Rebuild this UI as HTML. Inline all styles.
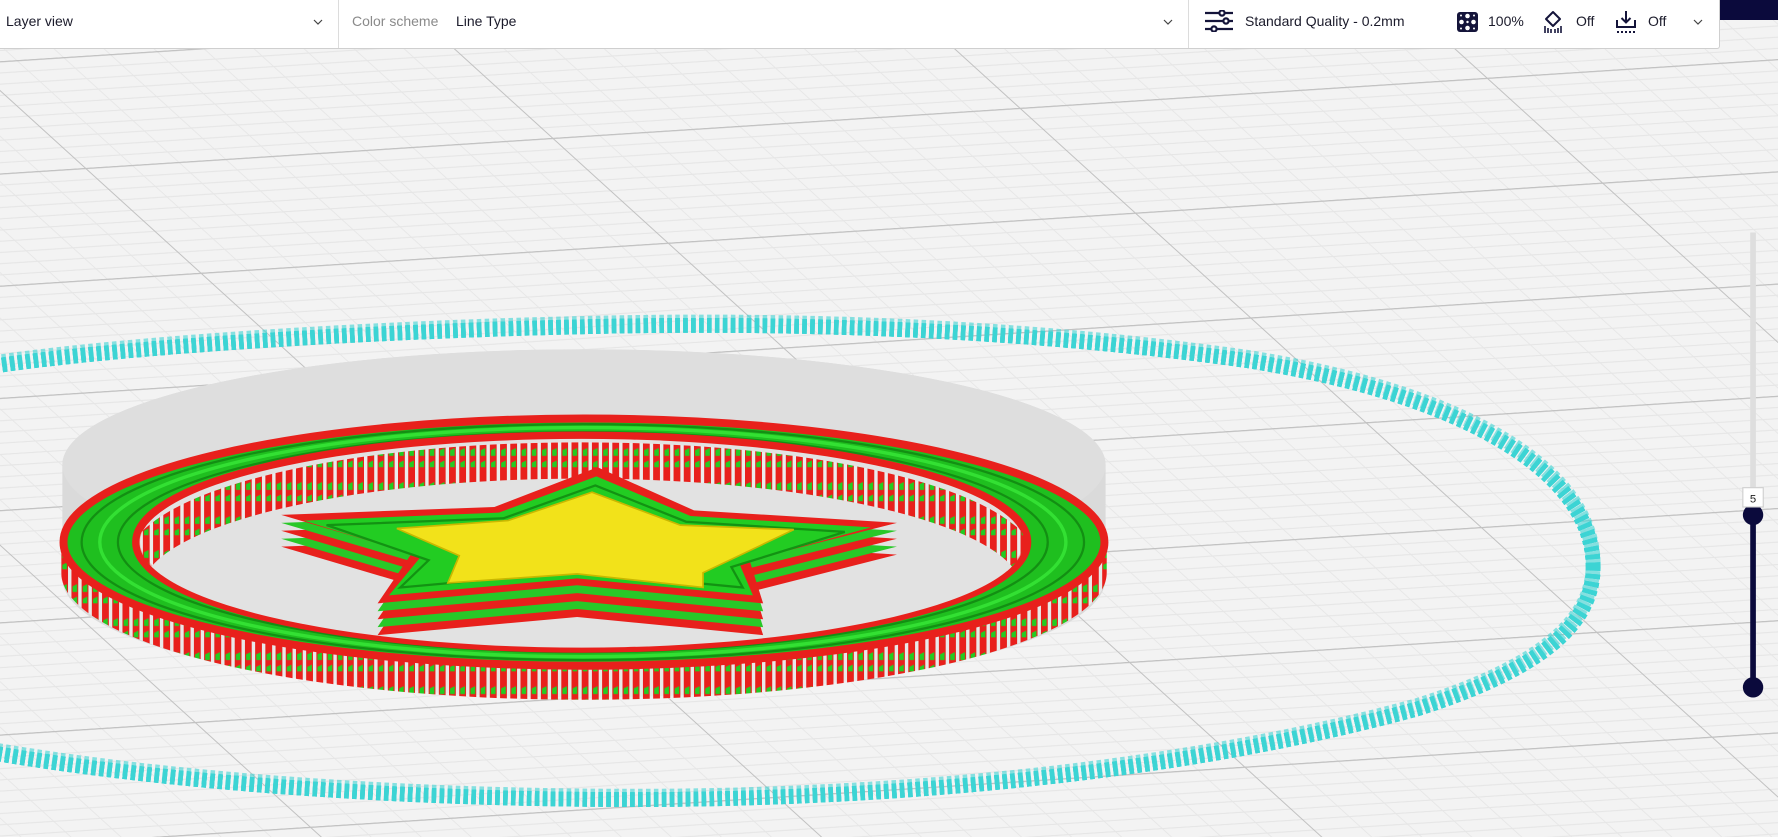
<!DOCTYPE html>
<html><head><meta charset="utf-8">
<style>
html,body{margin:0;padding:0;width:1778px;height:837px;overflow:hidden;background:#f3f3f3;font-family:"Liberation Sans",sans-serif;}
#scene{position:absolute;left:0;top:0;}
.hdr{position:absolute;left:0;top:0;width:1719px;height:48px;background:#fff;border-bottom:1px solid #cfcfcf;border-right:1px solid #cfcfcf;border-bottom-right-radius:3px;}
.t{position:absolute;top:13px;font-size:14px;color:#1b1b2b;white-space:nowrap;line-height:17px;}
.g{color:#8a8a8a;}
.div{position:absolute;top:0;width:1px;height:48px;background:#dcdcdc;}
.chev{position:absolute;top:16px;}
.navy{position:absolute;left:1720px;top:0;width:58px;height:20px;background:#0b0a3c;}
</style></head><body>
<svg id="scene" width="1778" height="837" viewBox="0 0 1568 738" preserveAspectRatio="none">
<defs>
<pattern id="grid" patternUnits="userSpaceOnUse" width="100" height="100" patternTransform="matrix(4.12 -0.265 1.017 0.924 384.8 29.2)">
<rect width="100" height="100" fill="#f3f3f3"/>
<g fill="#e6e6e6">
<rect x="10" width="0.25" height="100"/><rect x="20" width="0.25" height="100"/><rect x="30" width="0.25" height="100"/><rect x="40" width="0.25" height="100"/><rect x="50" width="0.25" height="100"/><rect x="60" width="0.25" height="100"/><rect x="70" width="0.25" height="100"/><rect x="80" width="0.25" height="100"/><rect x="90" width="0.25" height="100"/>
<rect y="10" height="1" width="100"/><rect y="20" height="1" width="100"/><rect y="30" height="1" width="100"/><rect y="40" height="1" width="100"/><rect y="50" height="1" width="100"/><rect y="60" height="1" width="100"/><rect y="70" height="1" width="100"/><rect y="80" height="1" width="100"/><rect y="90" height="1" width="100"/>
</g>
<g fill="#c2c2c2"><rect x="0" width="0.3" height="100"/><rect y="0" height="1.15" width="100"/></g>
</pattern>
<pattern id="teeth" patternUnits="userSpaceOnUse" width="9" height="30">
<polygon points="0,0 6,0 6,30 0,30" fill="#e8201c"/>
<polygon points="1,7 5,5 5,12 1,12" fill="#22cc22"/>
<polygon points="1,18 5,16 5,22 1,22" fill="#22cc22"/>
<rect x="6" width="3" height="30" fill="#f0f0f0" opacity="0.7"/>
</pattern>
<clipPath id="innerClip"><ellipse cx="513" cy="478" rx="390" ry="93"/></clipPath>
</defs>
<rect width="1568" height="738" fill="url(#grid)"/>

<path d="M55,410 A460,102 0 0 1 975,410 L975,510 A460,105 0 0 1 55,510 Z" fill="#dadada"/>
<ellipse cx="515" cy="410" rx="460" ry="102" fill="#dedede"/>

<g fill="none">
<path id="sk" d="M1405,500 C1405,420 1300,350 1100,318 C900,290 700,284 520,288 C330,292 120,305 0,322 C-120,340 -160,420 -160,500 C-160,600 -100,655 0,665 C150,690 350,705 560,705 C800,705 1050,680 1250,625 C1360,590 1405,550 1405,500 Z" stroke="#3cd4d4" stroke-width="13" stroke-dasharray="4 3"/>
<use href="#sk" stroke="#10fafa" stroke-width="11" stroke-dasharray="5 4"/>
<use href="#sk" stroke="#ffffff" stroke-width="1.5" stroke-dasharray="6 3" opacity="0.9"/>
<use href="#sk" stroke="#ffffff" stroke-width="1" transform="translate(0,-3)" opacity="0.6" stroke-dasharray="4 5"/>
</g>

<path d="M54,478 L54,505 A461,112 0 0 0 976,505 L976,478 A461,110 0 0 1 54,478 Z" fill="url(#teeth)"/>
<path d="M54,478 A461,110 0 1 0 976,478 A461,110 0 1 0 54,478 Z M123,478 A390,93 0 1 1 903,478 A390,93 0 1 1 123,478 Z" fill="#1fbf1f" fill-rule="evenodd"/>
<ellipse cx="515" cy="478" rx="459" ry="109" fill="none" stroke="#e8201c" stroke-width="7"/>
<ellipse cx="514" cy="478" rx="442" ry="104" fill="none" stroke="#138f13" stroke-width="2"/>
<ellipse cx="514" cy="478" rx="426" ry="101" fill="none" stroke="#33e033" stroke-width="3"/>
<ellipse cx="514" cy="478" rx="410" ry="97" fill="none" stroke="#138f13" stroke-width="2"/>
<ellipse cx="513" cy="478" rx="393" ry="94" fill="none" stroke="#e8201c" stroke-width="7"/>
<ellipse cx="513" cy="478" rx="388" ry="91" fill="#e2e2e2"/>
<g clip-path="url(#innerClip)">
<ellipse cx="513" cy="505" rx="388" ry="98" fill="none" stroke="url(#teeth)" stroke-width="34"/>
<ellipse cx="513" cy="520" rx="388" ry="98" fill="#e2e2e2"/>
</g>

<g>
<polygon points="527,440 612,478 791,489 661,522 673,560 509,544 333,560 363,516 248,482 436,475" fill="#e8201c"/>
<polygon points="527,433 612,471 791,482 661,515 673,553 509,537 333,553 363,509 248,475 436,468" fill="#28c828"/>
<polygon points="527,426 612,464 791,475 661,508 673,546 509,530 333,546 363,502 248,468 436,461" fill="#e8201c"/>
<polygon points="527,419 612,457 791,468 661,501 673,539 509,523 333,539 363,495 248,461 436,454" fill="#28c828"/>
<polygon points="527,412 612,450 791,461 661,494 673,532 509,516 333,532 363,488 248,454 436,447" fill="#e8201c"/>
<polygon points="526,420 609,455 768,465 652,497 664,525 509,510 343,525 371,491 268,459 440,452" fill="#22cc22"/>
<polygon points="525,428 605,460 745,469 645,500 655,518 509,504 353,518 378,494 288,463 444,457" fill="none" stroke="#139213" stroke-width="2"/>
<polygon points="522,434 600,463 700,467 620,505 620,518 509,506 395,514 405,490 350,466 448,459" fill="#f2e21a"/>
<polygon points="522,434 600,463 700,467 620,505 620,518 509,506 395,514 405,490 350,466 448,459" fill="none" stroke="#c9b800" stroke-width="1.5"/>
</g>

<rect x="1543.5" y="205" width="5" height="250" fill="#dedede"/>
<rect x="1543.5" y="454" width="5" height="152" fill="#0b0a3c"/>
<circle cx="1546" cy="454" r="9" fill="#0b0a3c"/>
<circle cx="1546" cy="606" r="9" fill="#0b0a3c"/>
<rect x="1537" y="430" width="18" height="17" fill="#fff" stroke="#cfcfcf"/>
<text x="1546" y="443" font-size="10" text-anchor="middle" fill="#222" font-family="Liberation Sans, sans-serif">5</text>
</svg>

<div class="hdr"></div>
<div class="navy"></div>
<div class="t" style="left:6px;">Layer view</div>
<svg class="chev" style="left:312px" width="12" height="12" viewBox="0 0 12 12"><path d="M2,4 L6,8 L10,4" fill="none" stroke="#444" stroke-width="1.2"/></svg>
<div class="div" style="left:338px"></div>
<div class="t g" style="left:352px;">Color scheme</div>
<div class="t" style="left:456px;">Line Type</div>
<svg class="chev" style="left:1162px" width="12" height="12" viewBox="0 0 12 12"><path d="M2,4 L6,8 L10,4" fill="none" stroke="#444" stroke-width="1.2"/></svg>
<div class="div" style="left:1188px"></div>
<svg style="position:absolute;left:1205px;top:10px" width="29" height="22" viewBox="0 0 29 22">
<g stroke="#14143a" stroke-width="2.2" fill="#fff">
<line x1="0" y1="3" x2="28" y2="3"/><line x1="0" y1="11" x2="28" y2="11"/><line x1="0" y1="19" x2="28" y2="19"/>
<circle cx="17" cy="3" r="2.6"/><circle cx="21" cy="11" r="2.6"/><circle cx="9" cy="19" r="2.6"/></g></svg>
<div class="t" style="left:1245px;">Standard Quality - 0.2mm</div>
<svg style="position:absolute;left:1457px;top:12px" width="21" height="20" viewBox="0 0 21 20">
<rect x="0" y="0" width="21" height="20" rx="3" fill="#14143a"/>
<g fill="#fff"><circle cx="10.5" cy="4" r="2.3"/><circle cx="10.5" cy="16" r="2.3"/><circle cx="4.5" cy="10" r="2.3"/><circle cx="16.5" cy="10" r="2.3"/><circle cx="4" cy="3.5" r="1"/><circle cx="17" cy="3.5" r="1"/><circle cx="4" cy="16.5" r="1"/><circle cx="17" cy="16.5" r="1"/><circle cx="10.5" cy="10" r="1.2"/></g></svg>
<div class="t" style="left:1488px;">100%</div>
<svg style="position:absolute;left:1543px;top:10px" width="20" height="24" viewBox="0 0 20 24">
<path d="M10,2 L17,9 L10,16 L3,9 Z" fill="none" stroke="#14143a" stroke-width="2" stroke-linejoin="round"/>
<g stroke="#14143a" stroke-width="1.6"><line x1="2" y1="16" x2="2" y2="23"/><line x1="5" y1="18" x2="5" y2="23"/><line x1="8" y1="19" x2="8" y2="23"/><line x1="12" y1="19" x2="12" y2="23"/><line x1="15" y1="18" x2="15" y2="23"/><line x1="18" y1="16" x2="18" y2="23"/></g></svg>
<div class="t" style="left:1576px;">Off</div>
<svg style="position:absolute;left:1615px;top:10px" width="22" height="24" viewBox="0 0 22 24">
<g stroke="#14143a" stroke-width="2" fill="none"><line x1="11" y1="1" x2="11" y2="12"/><path d="M6.5,8 L11,12.5 L15.5,8"/><path d="M2,10 L2,17 L20,17 L20,10"/></g>
<g fill="#14143a"><rect x="2" y="21" width="2" height="2"/><rect x="6" y="21" width="2" height="2"/><rect x="10" y="21" width="2" height="2"/><rect x="14" y="21" width="2" height="2"/><rect x="18" y="21" width="2" height="2"/></g></svg>
<div class="t" style="left:1648px;">Off</div>
<svg class="chev" style="left:1692px" width="12" height="12" viewBox="0 0 12 12"><path d="M2,4 L6,8 L10,4" fill="none" stroke="#444" stroke-width="1.2"/></svg>
</body></html>
